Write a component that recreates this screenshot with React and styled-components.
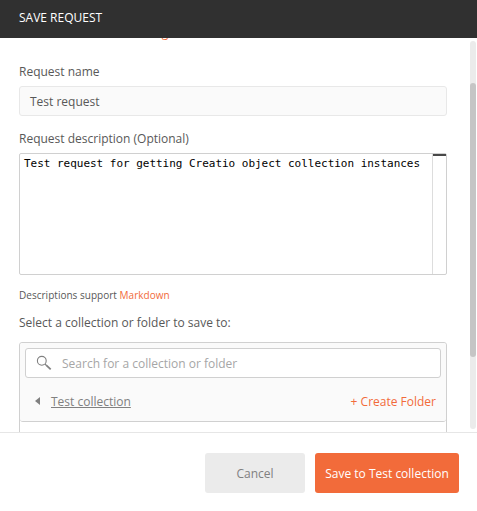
import React from 'react';
import styled, { createGlobalStyle } from 'styled-components';

const GlobalStyle = createGlobalStyle`
  * { box-sizing: border-box; }
  body {
    margin: 0;
    background: #fff;
    font-family: "Open Sans", sans-serif;
    font-size: 12px;
    color: #585858;
  }
`;

const Dialog = styled.div`
  display: flex;
  flex-direction: column;
  width: 477px;
  height: 511px;
  overflow: hidden;
`;

const Header = styled.header`
  flex: 0 0 38px;
  padding: 9px 19px 0;
  line-height: 18px;
  background: #303030;
  color: #fff;
`;

const Body = styled.main`
  flex: 1;
  min-height: 0;
  display: flex;
  justify-content: space-between;
  overflow: hidden;
`;

const Form = styled.div`
  width: 428px;
  height: 394px;
  margin-left: 19px;
  display: flex;
  flex-direction: column;
  overflow: hidden;
`;

const Intro = styled.a`
  flex: none;
  height: 18px;
  margin-top: -14px;
  line-height: 18px;
  color: #f26b3a;
`;

const Label = styled.label`
  flex: none;
  height: 18px;
  line-height: 18px;
  margin-top: ${(p) => p.$top}px;
  white-space: nowrap;
`;

const NameField = styled.div`
  flex: none;
  height: 30px;
  margin-top: 5px;
  padding: 0 10px;
  line-height: 30px;
  background: #fafafa;
  border: 1px solid #e8e8e8;
  border-radius: 3px;
`;

const Editor = styled.div`
  flex: none;
  display: flex;
  height: 122px;
  margin-top: 5px;
  border: 1px solid #d0d0d0;
  border-radius: 2px;
`;

const EditorText = styled.div`
  flex: 1;
  padding: 2px 0 0 4px;
  font: 11px/15px "DejaVu Sans Mono", monospace;
  letter-spacing: -0.022px;
  color: #000;
  white-space: nowrap;
`;

const Ruler = styled.div`
  width: 14px;
  border-left: 1px solid #ddd;
`;

const RulerMark = styled.div`
  height: 2px;
  background: #484848;
`;

const Hint = styled.div`
  flex: none;
  height: 14px;
  margin-top: 13px;
  font-size: 10px;
  line-height: 14px;
  letter-spacing: 0.02px;
`;

const Link = styled.a`
  color: #f26b3a;
`;

const Picker = styled.section`
  flex: none;
  height: 120px;
  margin-top: 10px;
  border: 1px solid #d0d0d0;
  border-radius: 3px;
`;

const PickerHead = styled.div`
  height: 79px;
  padding: 5px 5px 0;
  background: #fafafa;
  border-bottom: 1px solid #d0d0d0;
  border-radius: 3px;
`;

const SearchField = styled.div`
  display: flex;
  align-items: center;
  height: 30px;
  padding-left: 10px;
  gap: 10px;
  background: #fff;
  border: 1px solid #d0d0d0;
  border-radius: 3px;
  color: #a6a6a6;
`;

const PathRow = styled.div`
  display: flex;
  align-items: center;
  height: 46px;
  padding: 0 5px 0 10px;
`;

const Crumb = styled.a`
  margin-left: 11px;
  color: #808080;
  text-decoration: underline;
  text-decoration-skip-ink: none;
`;

const CreateLink = styled(Link)`
  margin-left: auto;
`;

const ScrollTrack = styled.div`
  width: 6px;
  height: 388px;
  margin: 3px 1px 0 0;
  padding-top: 42px;
  background: #ebebeb;
  border-radius: 3px;
`;

const ScrollThumb = styled.div`
  height: 274px;
  background: #c5c5c5;
  border-radius: 3px;
`;

const Footer = styled.footer`
  flex: 0 0 79px;
  display: flex;
  justify-content: flex-end;
  gap: 10px;
  padding: 20px 18px 0 0;
  border-top: 1px solid #e6e6e6;
`;

const Button = styled.button`
  width: ${(p) => (p.$primary ? 144 : 100)}px;
  height: 40px;
  padding: 0;
  border: 0;
  border-radius: 3px;
  font: inherit;
  white-space: nowrap;
  background: ${(p) => (p.$primary ? '#f26b3a' : '#ebebeb')};
  color: ${(p) => (p.$primary ? '#fff' : '#808080')};
`;

const SearchIcon = () => (
  <svg width="16" height="16" viewBox="0 0 16 16" fill="none" stroke="#808080">
    <circle cx="5.8" cy="5.8" r="4.4" strokeWidth="1.1" />
    <path d="M9 9l1.3 1.3" strokeWidth="1.1" />
    <path d="M10.2 10.2l4.5 4.2" strokeWidth="1.8" />
  </svg>
);

const BackIcon = () => (
  <svg width="5" height="8" viewBox="0 0 5 8" fill="#808080">
    <path d="M5 0v8L0 4z" />
  </svg>
);

export default function App() {
  return (
    <Dialog>
      <GlobalStyle />
      <Header>SAVE REQUEST</Header>
      <Body>
        <Form>
          <Intro>Learn more about creating collections</Intro>
          <Label $top={21}>Request name</Label>
          <NameField>Test request</NameField>
          <Label $top={14}>Request description (Optional)</Label>
          <Editor>
            <EditorText>Test request for getting Creatio object collection instances</EditorText>
            <Ruler>
              <RulerMark />
            </Ruler>
          </Editor>
          <Hint>
            Descriptions support <Link>Markdown</Link>
          </Hint>
          <Label $top={12}>Select a collection or folder to save to:</Label>
          <Picker>
            <PickerHead>
              <SearchField>
                <SearchIcon />
                <span>Search for a collection or folder</span>
              </SearchField>
              <PathRow>
                <BackIcon />
                <Crumb>Test collection</Crumb>
                <CreateLink>+ Create Folder</CreateLink>
              </PathRow>
            </PickerHead>
          </Picker>
        </Form>
        <ScrollTrack>
          <ScrollThumb />
        </ScrollTrack>
      </Body>
      <Footer>
        <Button>Cancel</Button>
        <Button $primary>Save to Test collection</Button>
      </Footer>
    </Dialog>
  );
}
